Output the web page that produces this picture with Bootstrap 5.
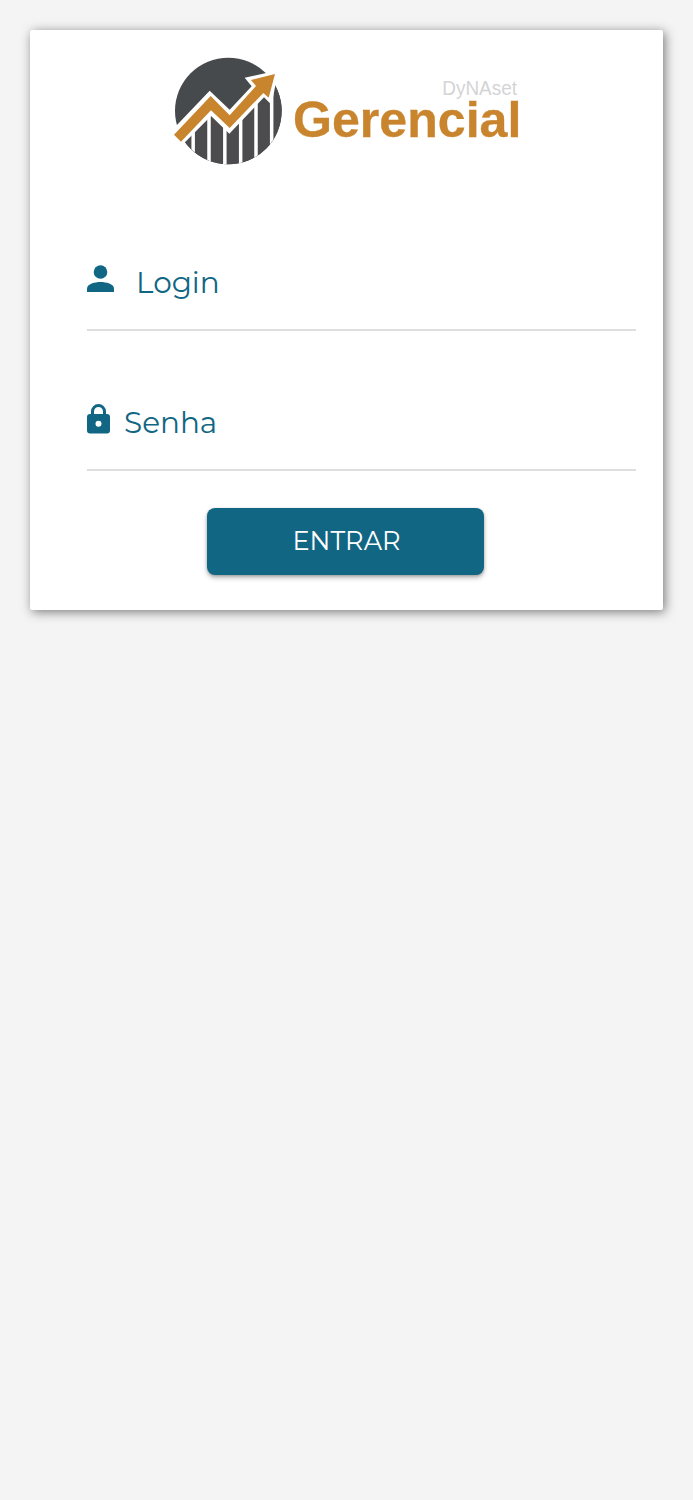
<!DOCTYPE html>
<html lang="pt-BR">
<head>
<meta charset="utf-8">
<meta name="viewport" content="width=device-width, initial-scale=1">
<title>DyNAset Gerencial</title>
<link href="https://cdn.jsdelivr.net/npm/bootstrap@5.3.0/dist/css/bootstrap.min.css" rel="stylesheet">
<style>
body{background:#f4f4f4;font-family:Montserrat,Inter,sans-serif;color:#116683;padding:29.5px 30px 0 29.5px}
.login-card{height:580px;border-radius:2px;box-shadow:2px 2px 11px rgba(0,0,0,.5)}
.logo{margin:15.5px 0 0 135.5px;width:370px;height:130px}
.login-form{padding:60.5px 27.5px 0 57.5px}
.field{height:95px;border-bottom:2px solid #dedede;margin-bottom:45.5px;color:#116683}
.field svg{fill:#116683;flex:none}
.user-icon{margin-top:29px}
.lock-icon{margin-top:28px}
.field input{font-size:29.5px;font-weight:400;line-height:36px;color:#116683;outline:0;height:36px;margin-top:28px}
.field input::placeholder{color:#116683;opacity:1}
.field .login-input{margin-left:22px}
.field .pass-input{margin-left:14px}
.btn-enter{width:277px;height:67px;margin:-9px 0 0 120px;padding-top:7px;padding-left:14px;background:#116683;color:#fff;border:0;border-radius:8px;font-size:25.6px;font-weight:400;box-shadow:0 3px 5px rgba(0,0,0,.25),0 1px 3px rgba(0,0,0,.2)}
.btn-enter:hover{background:#0e5871;color:#fff}
</style>
</head>
<body class="min-vh-100">
<main class="login-card bg-white d-flex flex-column">
<svg class="logo d-block" viewBox="0 0 1110 390" role="img" aria-label="DyNAset Gerencial">
<defs>
<clipPath id="disc"><circle cx="190" cy="198" r="160"/></clipPath>
</defs>
<g clip-path="url(#disc)">
<path fill="#464a4c" d="M0 0H390V390H0z"/>
<path fill="#4c4b4d" d="M0 310 138 180 194 235 300 130 390 90V390H0z"/>
<path stroke="#fff" stroke-width="10.500" d="M84.500 220V390M132 190V390M179.500 220V390M227 210V390M273 170V390M320 130V390"/>
</g>
<path fill="#fff" d="M18 259 134 137 194 194 260 124 239 98 340 76 323 162 315 175 297 157 193 266 138 213 48 304z"/>
<path fill="#c9842e" d="M27 269 137 153 194 211 273 123 258 105 330 87 311 158 295 144 194 249 138 196 48 290z"/>
<text x="832" y="150" font-family="Liberation Sans,Arial,sans-serif" font-size="58" fill="#d4d4d5" textLength="224" lengthAdjust="spacingAndGlyphs">DyNAset</text>
<text x="384" y="277" font-family="Liberation Sans,Arial,sans-serif" font-weight="700" font-size="152" fill="#c9842e" stroke="#c9842e" stroke-width="1" textLength="685" lengthAdjust="spacingAndGlyphs">Gerencial</text>
</svg>
<form class="login-form" onsubmit="return false">
<div class="field d-flex align-items-start">
<svg class="user-icon" width="27" height="28" viewBox="0 0 27 28"><circle cx="13.500" cy="7" r="6.800"/><path d="M0 27V23.500C0 19 8 17 13.500 17S27 19 27 23.500V27z"/></svg>
<input class="login-input border-0 bg-transparent p-0 flex-grow-1" type="text" placeholder="Login" aria-label="Login">
</div>
<div class="field d-flex align-items-start">
<svg class="lock-icon" width="23" height="30" viewBox="0 0 23 30"><path fill-rule="evenodd" d="M3 10H4V7.500a7.500 7.500 0 0 1 15 0V10h1a3 3 0 0 1 3 3v13.500a3 3 0 0 1-3 3H3a3 3 0 0 1-3-3V13a3 3 0 0 1 3-3zm4 0h9V7.500a4.500 4.500 0 0 0-9 0zm4.500 6.700a3 3 0 1 0 0 6 3 3 0 0 0 0-6z"/></svg>
<input class="pass-input border-0 bg-transparent p-0 flex-grow-1" type="password" placeholder="Senha" aria-label="Senha">
</div>
<button class="btn btn-enter" type="submit">ENTRAR</button>
</form>
</main>
<script src="https://cdn.jsdelivr.net/npm/bootstrap@5.3.0/dist/js/bootstrap.bundle.min.js"></script>
</body>
</html>
